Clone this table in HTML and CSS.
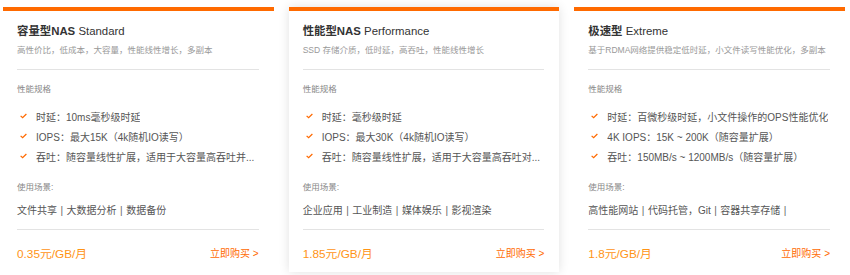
FILE: index.html
```html
<!DOCTYPE html>
<html lang="zh-CN">
<head>
<meta charset="utf-8">
<title>NAS 规格</title>
<link rel="stylesheet" href="styles.css">
</head>
<body>
<div class="cards">
  <div class="card">
    <div class="card-body">
      <div class="title"><b>容量型NAS</b> Standard</div>
      <div class="subtitle">高性价比，低成本，大容量，性能线性增长，多副本</div>
      <div class="divider"></div>
      <div class="label">性能规格</div>
      <ul class="features">
        <li><svg class="check" viewBox="0 0 8 6"><polyline points="0.7,2.8 3,5 7.3,0.7"/></svg><span>时延：10ms毫秒级时延</span></li>
        <li><svg class="check" viewBox="0 0 8 6"><polyline points="0.7,2.8 3,5 7.3,0.7"/></svg><span>IOPS：最大15K（4k随机IO读写）</span></li>
        <li><svg class="check" viewBox="0 0 8 6"><polyline points="0.7,2.8 3,5 7.3,0.7"/></svg><span>吞吐：随容量线性扩展，适用于大容量高吞吐并...</span></li>
      </ul>
      <div class="label scene">使用场景:</div>
      <div class="tags">文件共享<span class="sep">|</span>大数据分析<span class="sep">|</span>数据备份</div>
      <div class="divider lower"></div>
      <div class="footer">
        <span class="price">0.35元/GB/月</span>
        <span class="buy">立即购买 &gt;</span>
      </div>
    </div>
  </div>
  <div class="card active">
    <div class="card-body">
      <div class="title"><b>性能型NAS</b> Performance</div>
      <div class="subtitle">SSD 存储介质，低时延，高吞吐，性能线性增长</div>
      <div class="divider"></div>
      <div class="label">性能规格</div>
      <ul class="features">
        <li><svg class="check" viewBox="0 0 8 6"><polyline points="0.7,2.8 3,5 7.3,0.7"/></svg><span>时延：毫秒级时延</span></li>
        <li><svg class="check" viewBox="0 0 8 6"><polyline points="0.7,2.8 3,5 7.3,0.7"/></svg><span>IOPS：最大30K（4k随机IO读写）</span></li>
        <li><svg class="check" viewBox="0 0 8 6"><polyline points="0.7,2.8 3,5 7.3,0.7"/></svg><span>吞吐：随容量线性扩展，适用于大容量高吞吐对...</span></li>
      </ul>
      <div class="label scene">使用场景:</div>
      <div class="tags">企业应用<span class="sep">|</span>工业制造<span class="sep">|</span>媒体娱乐<span class="sep">|</span>影视渲染</div>
      <div class="divider lower"></div>
      <div class="footer">
        <span class="price">1.85元/GB/月</span>
        <span class="buy">立即购买 &gt;</span>
      </div>
    </div>
  </div>
  <div class="card">
    <div class="card-body">
      <div class="title"><b>极速型</b> Extreme</div>
      <div class="subtitle">基于RDMA网络提供稳定低时延，小文件读写性能优化，多副本</div>
      <div class="divider"></div>
      <div class="label">性能规格</div>
      <ul class="features">
        <li><svg class="check" viewBox="0 0 8 6"><polyline points="0.7,2.8 3,5 7.3,0.7"/></svg><span>时延：百微秒级时延，小文件操作的OPS性能优化</span></li>
        <li><svg class="check" viewBox="0 0 8 6"><polyline points="0.7,2.8 3,5 7.3,0.7"/></svg><span>4K IOPS：15K ~ 200K（随容量扩展）</span></li>
        <li><svg class="check" viewBox="0 0 8 6"><polyline points="0.7,2.8 3,5 7.3,0.7"/></svg><span>吞吐：150MB/s ~ 1200MB/s（随容量扩展）</span></li>
      </ul>
      <div class="label scene">使用场景:</div>
      <div class="tags">高性能网站<span class="sep">|</span>代码托管，Git<span class="sep">|</span>容器共享存储<span class="sep">|</span></div>
      <div class="divider lower"></div>
      <div class="footer">
        <span class="price">1.8元/GB/月</span>
        <span class="buy">立即购买 &gt;</span>
      </div>
    </div>
  </div>
</div>
</body>
</html>
```

FILE: styles.css
```css
* { box-sizing: border-box; }
html, body { margin: 0; padding: 0; background: #fff; }
body {
  width: 850px;
  height: 275px;
  overflow: hidden;
  font-family: "Liberation Sans", "Noto Sans CJK SC", sans-serif;
  color: #333;
}
.cards {
  display: grid;
  grid-template-columns: repeat(3, minmax(0, 1fr));
  gap: 15px;
  padding: 7px 5px 0 3px;
}
.card {
  min-width: 0;
  background: #fff;
  border-top: 4px solid #ff6a00;
  height: 265px;
}
.card.active {
  box-shadow: 0 0 10px rgba(0, 0, 0, 0.12);
}
.card-body {
  padding: 12px 15px 0 14px;
}
.title {
  font-size: 11.4px;
  line-height: 16px;
  color: #333;
  white-space: nowrap;
}
.title b { font-weight: bold; }
.subtitle {
  margin-top: 5px;
  font-size: 8.5px;
  line-height: 12px;
  color: #999;
  white-space: nowrap;
}
.divider {
  margin-top: 13px;
  height: 1px;
  background: #e3e3e3;
}
.label {
  margin-top: 13px;
  font-size: 8.5px;
  line-height: 12px;
  color: #888;
}
.features {
  list-style: none;
  margin: 11px 0 0;
  padding: 0;
}
.features li {
  display: flex;
  align-items: center;
  height: 20px;
  font-size: 10px;
  color: #555;
}
.features li span {
  white-space: nowrap;
  overflow: hidden;
  text-overflow: ellipsis;
  min-width: 0;
}
.check {
  flex: none;
  width: 7px;
  height: 6px;
  margin: 0 9px 0 3px;
  fill: none;
  stroke: #ff6a00;
  stroke-width: 1.4;
}
.label.scene { margin-top: 15px; }
.tags {
  margin-top: 11px;
  font-size: 10px;
  line-height: 14px;
  color: #555;
  white-space: nowrap;
}
.sep {
  margin: 0 3.5px;
  color: #666;
}
.divider.lower { margin-top: 11px; }
.footer {
  margin-top: 14px;
  display: flex;
  justify-content: space-between;
  align-items: center;
  height: 16px;
}
.price {
  font-size: 11.8px;
  color: #ff9416;
}
.buy {
  font-size: 10px;
  color: #ff6a00;
}
```
